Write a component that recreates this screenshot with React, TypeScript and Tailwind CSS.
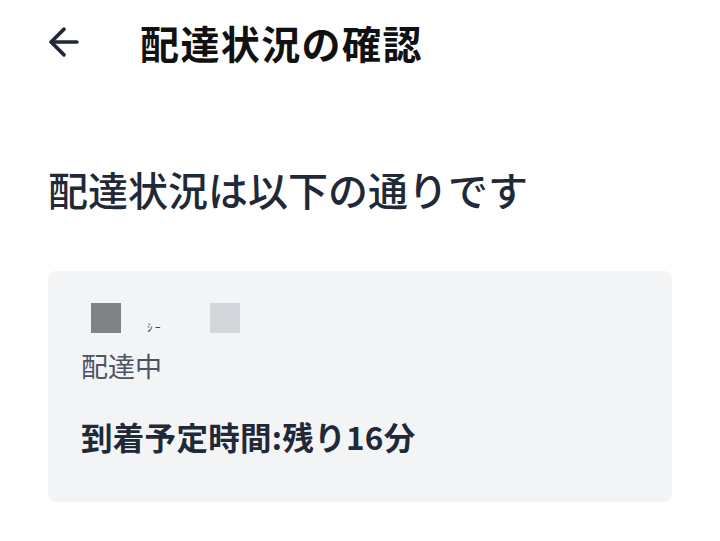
import { ArrowLeft } from "lucide-react";

export default function App() {
  return (
    <div
      className="w-[720px] h-[541px] bg-white overflow-hidden"
      style={{ fontFamily: '"Noto Sans CJK JP", "Noto Sans", sans-serif' }}
    >
      <header className="flex items-center h-[84px] pl-[42px]">
        <button className="w-[44px] h-[44px] flex items-center justify-center text-[#1f2937]">
          <ArrowLeft size={44} strokeWidth={2} />
        </button>
        <h1 className="ml-[54px] text-[39px] font-bold text-[#111111] tracking-[1.4px]">配達状況の確認</h1>
      </header>

      <main className="px-[48px]">
        <h2 className="mt-[79px] text-[40px] font-medium leading-[52px] text-[#1f2937]">
          配達状況は以下の通りです
        </h2>

        <div className="mt-[56px] w-[624px] h-[231px] rounded-[8px] bg-[#f3f4f6] pl-[33px] pt-[32px]">
          <div className="flex items-end h-[30px] pl-[10px]">
            <div className="w-[30px] h-[30px] bg-[#818285]" />
            <span className="ml-[26px] text-[11px] leading-none text-[#374151]">ｼ ｰ</span>
            <div className="ml-[50px] w-[30px] h-[30px] bg-[#d4d6db]" />
          </div>
          <p className="mt-[14px] text-[27px] leading-[38px] text-[#4b5563]">配達中</p>
          <p className="mt-[30px] text-[31.5px] leading-[42px] font-bold text-[#1f2937] tracking-[0.3px]">
            到着予定時間:残り16分
          </p>
        </div>
      </main>
    </div>
  );
}
